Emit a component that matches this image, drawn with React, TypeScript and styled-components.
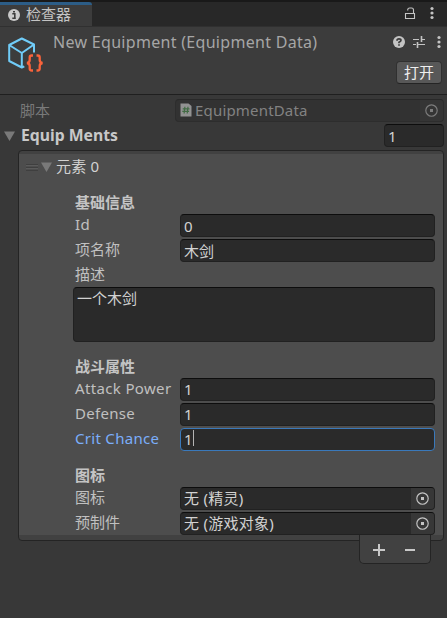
import React from "react";
import styled, { createGlobalStyle } from "styled-components";

const Global = createGlobalStyle`
  * { box-sizing: border-box; }
  body {
    margin: 0;
    background: #383838;
    color: #c4c4c4;
    font: 15px/20px "Noto Sans", "Noto Sans CJK SC", sans-serif;
    overflow: hidden;
  }
  svg { display: block; flex: none; }
`;

const Panel = styled.main`
  width: 447px;
  height: 618px;
  background: #383838;
`;

const TabBar = styled.header`
  display: flex;
  justify-content: space-between;
  height: 26px;
  border-top: 2px solid #191919;
  background: #282828;
`;

const Tab = styled.div`
  display: flex;
  align-items: center;
  gap: 6px;
  width: 92px;
  height: 24px;
  padding: 0 0 2px 8px;
  border-top: 3px solid #2c5d87;
  border-top-right-radius: 3px;
  background: #3c3c3c;
`;

const TabTools = styled.div`
  display: flex;
  gap: 14px;
  padding: 4px 13px 0 0;
`;

const AssetHeader = styled.section`
  display: flex;
  height: 69px;
  padding: 10px 5px 0 7px;
  border-top: 1px solid #303030;
  background: #3c3c3c;
  border-bottom: 1px solid #1f1f1f;
`;

const Line = styled.span<{ $spacing?: number; $shift?: number }>`
  white-space: pre;
  letter-spacing: ${(p) => p.$spacing ?? 0}px;
  margin-top: ${(p) => p.$shift ?? 0}px;
`;

const AssetTitle = styled.h1`
  flex: 1;
  margin: -5px 0 0 9px;
  font-size: 16px;
  font-weight: 400;
  line-height: 20px;
  letter-spacing: 0.3px;
  color: #a6a6a6;
  white-space: nowrap;
`;

const HeaderSide = styled.div`
  display: flex;
  flex-direction: column;
  align-items: flex-end;
  gap: 12px;
`;

const HeaderTools = styled.div`
  display: flex;
  margin: -2px 1px 0 0;
`;

const OpenButton = styled.button`
  width: 46px;
  height: 23px;
  padding: 0 0 2px;
  border: 1px solid #303030;
  border-bottom-color: #242424;
  border-radius: 4px;
  background: #585858;
  color: #eee;
  font: inherit;
  line-height: 18px;
`;

const TopRow = styled.div`
  display: flex;
  align-items: center;
  justify-content: space-between;
  height: 23px;
  margin: 0 3px 2px 4px;
`;

const ScriptLabel = styled.span`
  padding: 0 0 2px 16px;
  color: #7a7a7a;
`;

const Foldout = styled.div<{ $bold?: boolean }>`
  display: flex;
  align-items: center;
  gap: ${(p) => (p.$bold ? 6 : 4)}px;
  font-size: ${(p) => (p.$bold ? 15.75 : 15)}px;
  font-weight: ${(p) => (p.$bold ? 700 : 400)};
  color: ${(p) => (p.$bold ? "#c8c8c8" : "#d2d2d2")};
`;

const Field = styled.div<{ $width?: number; $focus?: boolean; $height?: number; $disabled?: boolean }>`
  display: flex;
  flex: none;
  justify-content: space-between;
  width: ${(p) => p.$width ?? 255}px;
  height: ${(p) => p.$height ?? 23}px;
  padding-left: 3px;
  border: 1px solid ${(p) => (p.$focus ? "#3a79bb" : p.$disabled ? "#2d2d2d" : "#212121")};
  border-top-color: ${(p) => (p.$focus ? "#3a79bb" : p.$disabled ? "#292929" : "#0d0d0d")};
  border-radius: 4px;
  background: ${(p) => (p.$disabled ? "#323232" : "#2a2a2a")};
  color: ${(p) => (p.$disabled ? "#828282" : "#d2d2d2")};
  overflow: hidden;
`;

const Value = styled.span<{ $up?: boolean }>`
  display: flex;
  height: 20px;
  margin-top: ${(p) => (p.$up ? 0 : 1)}px;
  white-space: pre;
`;

const Picker = styled.span<{ $disabled?: boolean }>`
  display: grid;
  place-items: center;
  width: 23px;
  background: ${(p) => (p.$disabled ? "#353535" : "#373737")};
`;

const Caret = styled.i`
  width: 1px;
  height: 16px;
  margin: 1px 0 0;
  background: #b4b4b4;
`;

const List = styled.section`
  width: 426px;
  height: 391px;
  margin: 3px 0 0 18px;
  padding-top: 3px;
  border: 1px solid #242424;
  border-radius: 4px;
  background: #414141;
`;

const Element = styled.div`
  height: 381px;
  padding: 3px 8px 0 54px;
  background: #4d4d4d;
`;

const ElementTitle = styled.div`
  display: flex;
  align-items: center;
  gap: 3px;
  height: 20px;
  margin-left: -47px;
`;

const Group = styled.div<{ $gap: number }>`
  padding-top: ${(p) => p.$gap}px;
`;

const GroupTitle = styled.h2`
  height: 23px;
  margin: 0;
  padding: 1px 0 0 2px;
  font-size: 15px;
  font-weight: 700;
  line-height: 20px;
  color: #c4c4c4;
`;

const Row = styled.div<{ $active?: boolean; $tight?: boolean }>`
  display: flex;
  justify-content: space-between;
  height: 23px;
  margin-bottom: ${(p) => (p.$tight ? 0 : 2)}px;
  padding-left: 2px;
  color: ${(p) => (p.$active ? "#7baefa" : "#c0c0c0")};
`;

const ListFooter = styled.footer`
  display: flex;
  align-items: center;
  justify-content: space-between;
  position: relative;
  width: 72px;
  height: 29px;
  margin: -6px 0 0 359px;
  padding: 1px 15px 0 13px;
  border: 1px solid #242424;
  border-top: 0;
  border-radius: 0 0 5px 5px;
  background: #414141;
`;

const Info = () => (
  <svg width="12" height="12" viewBox="0 0 12 12">
    <circle cx="6" cy="6" r="6" fill="#c9c9c9" />
    <path d="M4.3 4.8h2.5v4M4.3 9.2h3.5M5 2.7h2" stroke="#3c3c3c" strokeWidth="1.6" fill="none" />
  </svg>
);
const Lock = () => (
  <svg width="12" height="14" viewBox="0 0 12 14">
    <path d="M1.5 7.5h9v5h-9zM9.5 7V4q0-2-2-2H5.7q-2 0-2 2v.5" fill="none" stroke="#c4c4c4" strokeWidth="1.1" />
  </svg>
);
const Dots = () => (
  <svg width="4" height="14" viewBox="0 0 4 14" fill="#c4c4c4">
    <circle cx="2" cy="2.5" r="1.6" />
    <circle cx="2" cy="7" r="1.6" />
    <circle cx="2" cy="11.5" r="1.6" />
  </svg>
);
const AssetIcon = () => (
  <svg width="37" height="36" viewBox="0 0 37 36" fill="none">
    <path d="M27 15.5V7.5L14.8 1.5 2.2 8v16L14.8 30.5V16M2.2 8L14.8 16 27 7.5M14.8 30.5l2.5-1.2" stroke="#70ccf8" strokeWidth="2" strokeLinejoin="round" />
    <path d="M26 18.5h-1.3q-2 0-2 2V23q0 2.5-2.7 3 2.7.5 2.7 3v2.5q0 2 2 2H26M29.5 18.5h1.2q2 0 2 2V23q0 2.5 2.8 3-2.8.5-2.8 3v2.5q0 2-2 2h-1.2" stroke="#f9633b" strokeWidth="2.3" />
  </svg>
);
const Help = () => (
  <svg width="12" height="14" viewBox="0 0 12 14">
    <circle cx="6" cy="7" r="6" fill="#c4c4c4" />
    <path d="M4 5.7Q4 3.8 6 3.8T8 5.3Q8 6.2 6 7.2V8.2M6 9.2v1.5" fill="none" stroke="#3c3c3c" strokeWidth="1.7" />
  </svg>
);
const Sliders = () => (
  <svg width="12" height="14" viewBox="0 0 12 14">
    <path d="M0 4.5h6M8 4.5h4M0 9.5h3M5 9.5h7" stroke="#c4c4c4" />
    <path d="M8.5 1v6M4.5 7v6" stroke="#c4c4c4" strokeWidth="1.6" />
  </svg>
);
const Triangle = () => (
  <svg width="11" height="10" viewBox="0 0 11 10">
    <path d="M0 .5h11L5.5 10z" fill="#797979" />
  </svg>
);
const Grip = () => (
  <svg width="12" height="8" viewBox="0 0 12 8">
    <path d="M0 1.5h12M0 4.5h12M0 7.5h12" stroke="#3c3c3c" strokeWidth=".8" />
    <path d="M0 2.5h12M0 5.5h12" stroke="#626262" strokeWidth=".7" />
  </svg>
);
const ScriptIcon = () => (
  <svg width="12" height="14" viewBox="0 0 12 14">
    <path d="M1 .5h7.5L11.5 3v10.5H.5v-13z" fill="#929292" />
    <path d="M4.9 3.7l-.8 6.8M8 3.7l-.8 6.8M2.7 5.8h6.8M2.3 8.4h6.8" stroke="#426b44" strokeWidth="1.2" />
  </svg>
);
const Target = ({ color = "#c4c4c4" }: { color?: string }) => (
  <svg width="13" height="13" viewBox="0 0 13 13">
    <circle cx="6.5" cy="6.5" r="5.7" fill="none" stroke={color} strokeWidth="1.15" />
    <rect x="5" y="5" width="3" height="3" fill={color} />
  </svg>
);
const Plus = () => (
  <svg width="12" height="12" viewBox="0 0 12 12">
    <path d="M0 6h12M6 0v12" stroke="#c8c8c8" strokeWidth="2" />
  </svg>
);
const Minus = () => (
  <svg width="10" height="12" viewBox="0 0 10 12">
    <path d="M0 6h10" stroke="#c8c8c8" strokeWidth="2" />
  </svg>
);

const ToolSlot = styled.span<{ $left: number }>`
  margin-left: ${(p) => p.$left}px;
`;

const ScriptFile = styled.div`
  display: flex;
  align-items: center;
  gap: 3px;
  height: 20px;
  padding-left: 1px;
`;

const ScriptGap = styled.div`
  height: 4px;
`;

type PropertyProps = { label: string; value: string; spacing?: number; active?: boolean; object?: boolean };

const Property = ({ label, value, spacing, active, object }: PropertyProps) => (
  <Row $active={active}>
    <Line $spacing={spacing}>{label}</Line>
    <Field $focus={active}>
      <Value $up={object || value === "1"}>
        <Line $spacing={object ? 0.25 : 0}>{value}</Line>
        {active && <Caret />}
      </Value>
      {object && <Picker><Target /></Picker>}
    </Field>
  </Row>
);

export default function App() {
  return (
    <>
      <Global />
      <Panel>
        <TabBar>
          <Tab><Info /><Line $shift={-1}>检查器</Line></Tab>
          <TabTools><Lock /><Dots /></TabTools>
        </TabBar>
        <AssetHeader>
          <AssetIcon />
          <AssetTitle>New Equipment (Equipment Data)</AssetTitle>
          <HeaderSide>
            <HeaderTools>
              <Help />
              <ToolSlot $left={8}><Sliders /></ToolSlot>
              <ToolSlot $left={12}><Dots /></ToolSlot>
            </HeaderTools>
            <OpenButton>打开</OpenButton>
          </HeaderSide>
        </AssetHeader>
        <ScriptGap />
        <TopRow>
          <ScriptLabel>脚本</ScriptLabel>
          <Field $width={269} $disabled>
            <ScriptFile><ScriptIcon /><Line $spacing={0.18}>EquipmentData</Line></ScriptFile>
            <Picker $disabled><Target color="#7d7d7d" /></Picker>
          </Field>
        </TopRow>
        <TopRow>
          <Foldout $bold><Triangle /><Line $shift={-2}>Equip Ments</Line></Foldout>
          <Field $width={60}><Value>1</Value></Field>
        </TopRow>
        <List>
          <Element>
            <ElementTitle>
              <Grip />
              <Foldout><Triangle /><Line $shift={-2} $spacing={0.2}>元素 0</Line></Foldout>
            </ElementTitle>
            <Group $gap={14}>
              <GroupTitle>基础信息</GroupTitle>
              <Property label="Id" value="0" spacing={0.3} />
              <Property label="项名称" value="木剑" />
              <Row $tight><Line>描述</Line></Row>
              <Field $width={362} $height={55}><Value $up>一个木剑</Value></Field>
            </Group>
            <Group $gap={13}>
              <GroupTitle>战斗属性</GroupTitle>
              <Property label="Attack Power" value="1" spacing={0.35} />
              <Property label="Defense" value="1" spacing={0.3} />
              <Property label="Crit Chance" value="1" spacing={0.3} active />
            </Group>
            <Group $gap={11}>
              <GroupTitle>图标</GroupTitle>
              <Property label="图标" value="无 (精灵)" object />
              <Property label="预制件" value="无 (游戏对象)" object />
            </Group>
          </Element>
        </List>
        <ListFooter><Plus /><Minus /></ListFooter>
      </Panel>
    </>
  );
}
